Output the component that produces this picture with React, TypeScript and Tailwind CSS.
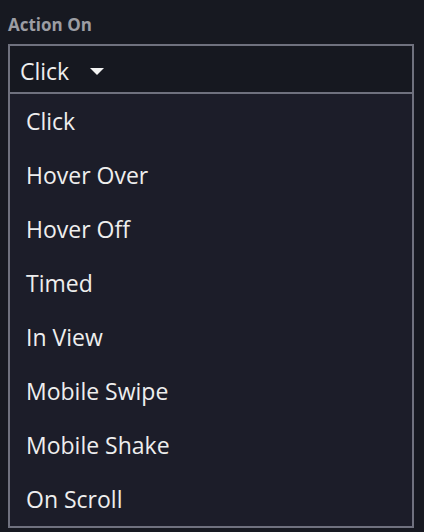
const options = [
  "Click",
  "Hover Over",
  "Hover Off",
  "Timed",
  "In View",
  "Mobile Swipe",
  "Mobile Shake",
  "On Scroll",
];

const App = () => {
  const selected = "Click";

  return (
    <div
      className="h-[532px] w-[424px] bg-[#171921] pl-2 pt-[14px]"
      style={{ fontFamily: '"Open Sans", "Noto Sans", sans-serif' }}
    >
      <div className="text-[17px] font-bold leading-[22px] text-[#9c9da3]">
        Action On
      </div>
      <div className="mt-2 w-[406px] border-2 border-[#6f717e]">
        <button className="flex h-[46px] w-full items-start bg-[#161820] pl-[10px] pt-[10px] text-left">
          <span className="text-[23px] leading-[30px] text-[#eeeeee]">
            {selected}
          </span>
          <span className="ml-[21px] flex h-[30px] items-center">
            <svg width="14" height="7" viewBox="0 0 14 7">
              <polygon points="0,0 14,0 7,7" fill="#f2f2f2" />
            </svg>
          </span>
        </button>
        <ul className="border-t-2 border-[#6f717e] bg-[#1c1d29]">
          {options.map((option) => (
            <li
              key={option}
              className="flex h-[54px] items-center pl-[16px] text-[23px] leading-[30px] text-[#eeeeee]"
            >
              {option}
            </li>
          ))}
        </ul>
      </div>
    </div>
  );
};

export default App;
